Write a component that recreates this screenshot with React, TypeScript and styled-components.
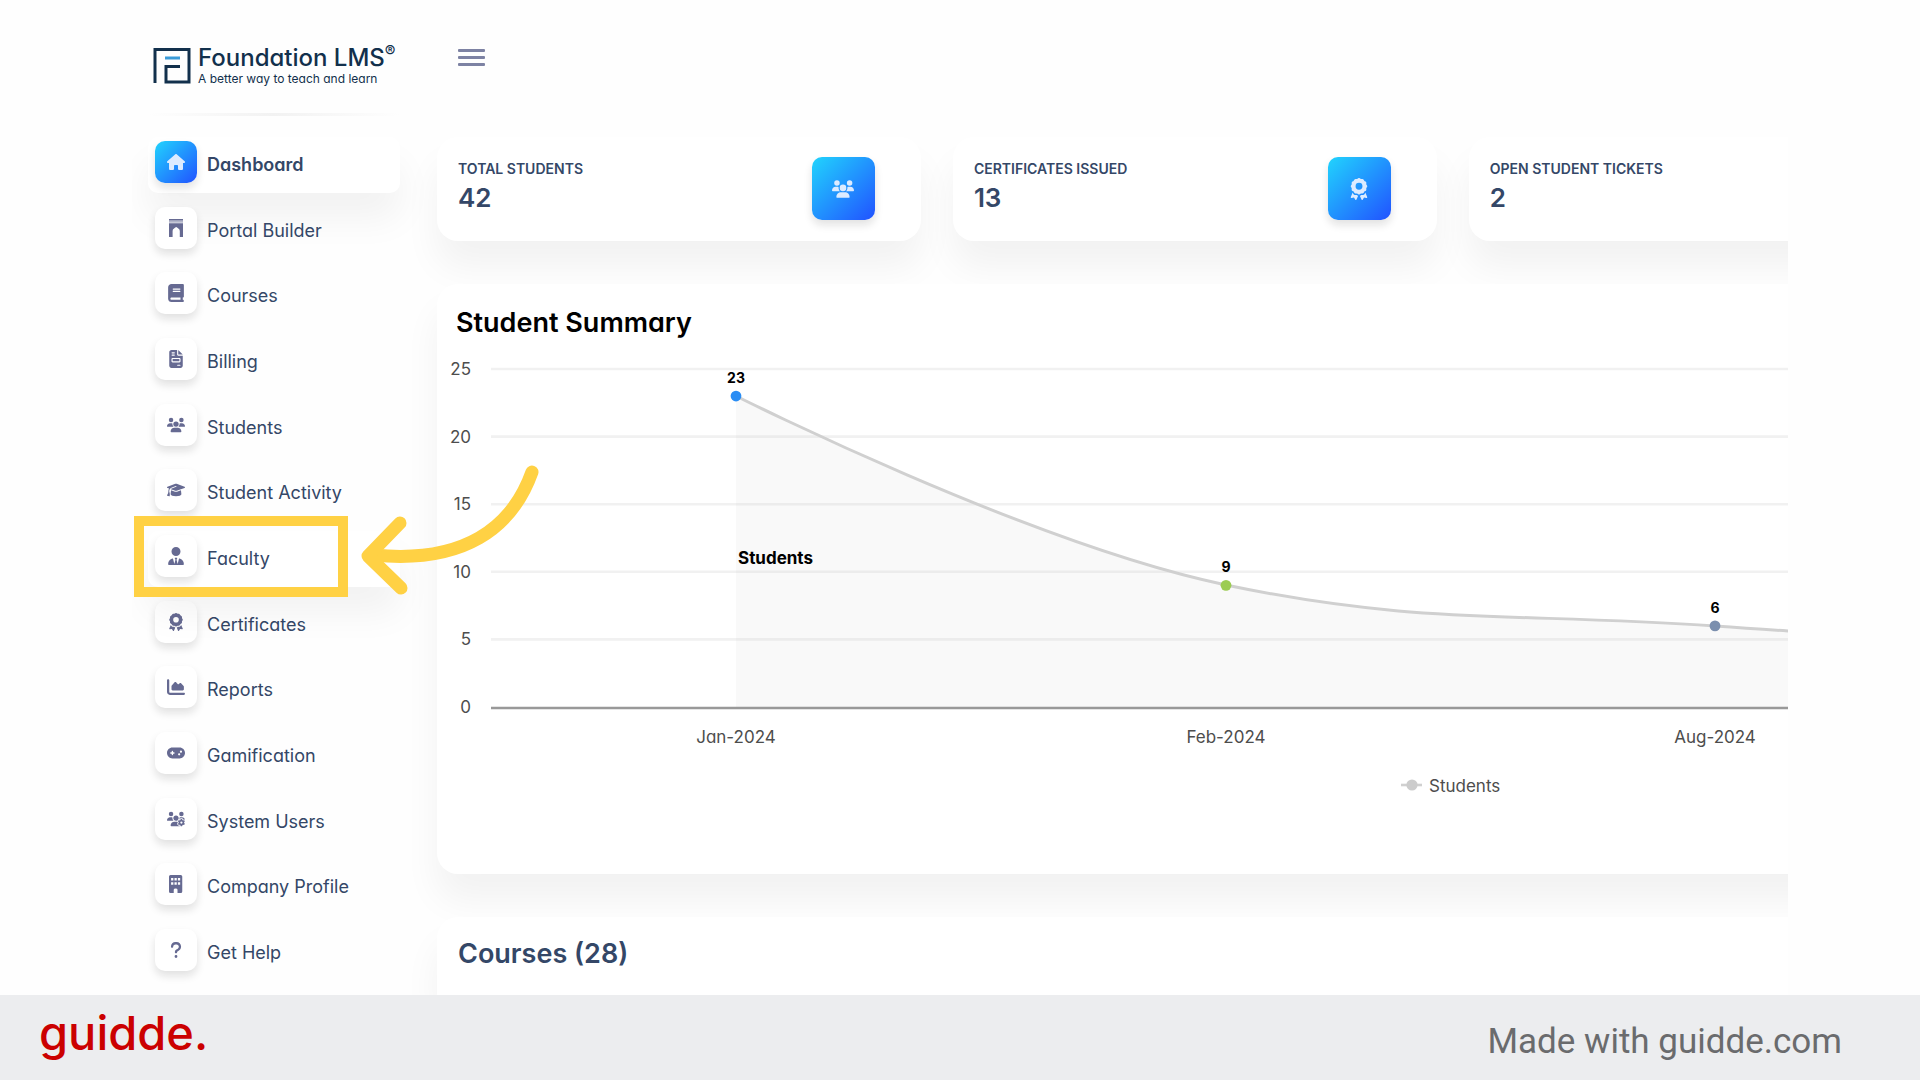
import React from "react";
import styled, { createGlobalStyle, css } from "styled-components";
import {
  FaHouse,
  FaBook,
  FaFileInvoice,
  FaUsers,
  FaGraduationCap,
  FaUserTie,
  FaAward,
  FaChartArea,
  FaGamepad,
  FaUsersGear,
  FaQuestion,
} from "react-icons/fa6";

const color = {
  ink: "#344767",
  icon: "#666a92",
  navy: "#12304c",
  highlight: "#ffd144",
  brand: "#cb0000",
};

const blueGradient = "linear-gradient(135deg, #21d4fd, #2152ff)";
const softShadow = "0 26px 36px rgba(0, 0, 0, 0.05)";
const tileShadow = "0 5px 8px rgba(20, 20, 20, 0.12)";

const GlobalStyle = createGlobalStyle`
  *, *::before, *::after { box-sizing: border-box; }
  body {
    margin: 0;
    background: #fefefe;
    color: ${color.ink};
    font-family: Inter, "Liberation Sans", sans-serif;
    font-feature-settings: "cv11";
  }
  h1, h2, p, ul, dl, dd { margin: 0; padding: 0; }
  ul { list-style: none; }
`;

const Page = styled.div`
  display: flex;
  flex-direction: column;
  min-height: 100vh;
`;

const Screen = styled.div`
  display: flex;
  flex: 1;
  margin: 0 132px;
  overflow: hidden;
`;

const Sidebar = styled.aside`
  display: flex;
  flex-direction: column;
  flex: none;
  width: 305px;
  padding: 0 37px 9px 16px;
`;

const Brand = styled.a`
  display: flex;
  gap: 7px;
  height: 113px;
  padding: 46px 0 0 5px;
  color: ${color.navy};
  text-decoration: none;
`;

const BrandMark = styled.svg`
  flex: none;
  width: 38px;
  height: 38px;
`;

const BrandName = styled.span`
  display: block;
  font-size: 24px;
  font-weight: 500;
  line-height: 24px;
  white-space: nowrap;
`;

const Registered = styled.sup`
  font-size: 16px;
  line-height: 0;
`;

const Tagline = styled.span`
  display: block;
  font-size: 12px;
  line-height: 18px;
  white-space: nowrap;
`;

const Divider = styled.hr`
  width: 100%;
  height: 3px;
  margin: 0 0 16px;
  border: 0;
  background: linear-gradient(90deg, transparent, #f2f2f2, transparent);
`;

const Nav = styled.nav`
  display: flex;
  flex: 1;
`;

const NavList = styled.ul`
  display: grid;
  flex: 1;
  grid-auto-rows: 1fr;
  align-items: center;
`;

const NavItem = styled.li<{ $highlighted?: boolean }>`
  position: relative;
  z-index: ${(p) => (p.$highlighted ? 2 : 1)};
`;

const NavLink = styled.a<{ $raised?: boolean; $active?: boolean }>`
  display: flex;
  gap: 10px;
  height: 56px;
  padding: 4px 7px;
  border-radius: 10px;
  color: ${color.ink};
  font-size: 18px;
  font-weight: ${(p) => (p.$active ? 600 : 400)};
  line-height: 48px;
  text-decoration: none;
  white-space: nowrap;
  ${(p) =>
    p.$raised &&
    css`
      background: #fff;
      box-shadow: ${softShadow};
    `}
`;

const NavTile = styled.span<{ $active?: boolean }>`
  display: grid;
  place-items: center;
  flex: none;
  width: 42px;
  height: 42px;
  border-radius: 10px;
  background: ${(p) => (p.$active ? blueGradient : "#fff")};
  box-shadow: ${tileShadow};
  color: ${(p) => (p.$active ? "#dcebff" : color.icon)};

  svg {
    width: auto;
    height: 18px;
  }
`;

const HighlightBox = styled.span`
  position: absolute;
  top: -15px;
  left: -14px;
  width: 214px;
  height: 81px;
  border: 10px solid ${color.highlight};
  pointer-events: none;
`;

const HighlightArrow = styled.svg`
  position: absolute;
  top: -75px;
  left: 208px;
  width: 190px;
  height: 146px;
  pointer-events: none;
`;

const Main = styled.main`
  display: flex;
  flex: 1;
  flex-direction: column;
  min-width: 0;
`;

const TopBar = styled.header`
  display: flex;
  align-items: flex-start;
  height: 137px;
  padding: 48px 21px 0;
`;

const MenuButton = styled.button`
  display: flex;
  flex-direction: column;
  justify-content: space-between;
  width: 27px;
  height: 19px;
  padding: 1px 0;
  border: 0;
  background: none;
`;

const MenuBar = styled.span`
  height: 3px;
  border-radius: 1px;
  background: #7d82a3;
`;

const Board = styled.div`
  display: flex;
  flex: 1;
  flex-direction: column;
  gap: 43px;
  width: calc(150% + 5px);
`;

const StatGrid = styled.dl`
  display: grid;
  grid-template-columns: repeat(4, 1fr);
  gap: 32px;
`;

const StatCard = styled.div`
  display: flex;
  justify-content: space-between;
  padding: 20px 46px 21px 21px;
  border-radius: 21px;
  background: #fff;
  box-shadow: ${softShadow};
`;

const StatLabel = styled.dt`
  font-size: 14px;
  font-weight: 600;
  line-height: 24px;
  text-transform: uppercase;
`;

const StatValue = styled.dd`
  font-size: 26px;
  font-weight: 600;
  line-height: 34px;
`;

const StatTile = styled.span`
  display: grid;
  place-items: center;
  width: 63px;
  height: 63px;
  border-radius: 10px;
  background: ${blueGradient};
  box-shadow: ${tileShadow};
  color: #dcebff;

  svg {
    width: auto;
    height: 22px;
  }
`;

const Panel = styled.section<{ $open?: boolean }>`
  flex: ${(p) => (p.$open ? "1" : "none")};
  border-radius: ${(p) => (p.$open ? "21px 21px 0 0" : "21px")};
  background: #fff;
  box-shadow: ${softShadow};
`;

const ChartTitle = styled.h2`
  padding: 19px 19px 1px;
  color: #000;
  font-size: 27px;
  font-weight: 600;
  line-height: 40px;
`;

const PanelTitle = styled.h2`
  padding: 17px 21px 0;
  font-size: 27px;
  font-weight: 600;
  line-height: 40px;
`;

const Chart = styled.svg`
  display: block;
  width: 2026px;
  height: 530px;
`;

const AxisText = styled.text`
  fill: #4d4d4d;
  font-size: 17px;
`;

const ValueText = styled.text`
  fill: #000;
  font-size: 14px;
  font-weight: 700;
  text-anchor: middle;
`;

const SeriesText = styled.text`
  fill: #000;
  font-size: 17px;
  font-weight: 700;
`;

const Footer = styled.footer`
  display: flex;
  align-items: center;
  justify-content: space-between;
  height: 85px;
  padding: 0 78px 0 39px;
  background: #ecedef;
`;

const GuiddeLogo = styled.a`
  padding-bottom: 10px;
  color: ${color.brand};
  font-size: 47px;
  font-weight: 500;
  line-height: 56px;
  text-decoration: none;
`;

const Credit = styled.p`
  padding-top: 8px;
  color: #6a6b6d;
  font-family: Roboto, sans-serif;
  font-size: 35px;
  line-height: 40px;
`;

function PortalIcon() {
  return (
    <svg viewBox="0 0 16 20" fill="currentColor" aria-hidden="true">
      <path d="M0 0H16V1.800H0Z" />
      <path d="M0 2.400H16V4H0Z" opacity="0.6" />
      <path d="M0 4.600H16V20H12V13.200C12 10.800 9.800 10.200 8 8.800C6.200 10.200 4 10.800 4 13.200V20H0Z" />
    </svg>
  );
}

function BuildingIcon() {
  return (
    <svg viewBox="0 0 14 19" fill="currentColor" fillRule="evenodd" aria-hidden="true">
      <path d="M1.600 0H12.400Q14 0 14 1.600V17.400Q14 19 12.400 19H9V15.500Q9 14.200 7 14.200Q5 14.200 5 15.500V19H1.600Q0 19 0 17.400V1.600Q0 0 1.600 0ZM2.200 3.200V5.800H4.600V3.200ZM5.800 3.200V5.800H8.200V3.200ZM9.400 3.200V5.800H11.800V3.200ZM2.200 7.600V10.200H4.600V7.600ZM5.800 7.600V10.200H8.200V7.600ZM9.400 7.600V10.200H11.800V7.600Z" />
    </svg>
  );
}

type NavEntry = {
  label: string;
  icon: React.ComponentType;
  active?: boolean;
  highlighted?: boolean;
};

const navEntries: NavEntry[] = [
  { label: "Dashboard", icon: FaHouse, active: true },
  { label: "Portal Builder", icon: PortalIcon },
  { label: "Courses", icon: FaBook },
  { label: "Billing", icon: FaFileInvoice },
  { label: "Students", icon: FaUsers },
  { label: "Student Activity", icon: FaGraduationCap },
  { label: "Faculty", icon: FaUserTie, highlighted: true },
  { label: "Certificates", icon: FaAward },
  { label: "Reports", icon: FaChartArea },
  { label: "Gamification", icon: FaGamepad },
  { label: "System Users", icon: FaUsersGear },
  { label: "Company Profile", icon: BuildingIcon },
  { label: "Get Help", icon: FaQuestion },
];

const stats = [
  { label: "Total Students", value: 42, icon: FaUsers },
  { label: "Certificates Issued", value: 13, icon: FaAward },
  { label: "Open Student Tickets", value: 2 },
];

const plot = { left: 54, right: 2012, base: 363, top: 25, max: 25 };
const yFor = (value: number) => plot.base - ((plot.base - plot.top) * value) / plot.max;

const points = [
  { month: "Jan-2024", value: 23, x: 299, fill: "#2a8df4" },
  { month: "Feb-2024", value: 9, x: 789, fill: "#9ccc52" },
  { month: "Aug-2024", value: 6, x: 1278, fill: "#7b8fae" },
];

const curve = "M299 52 C299 52 593 200 789 241 C985 282 1082 268 1278 282 C1474 296 1768 309 1768 309";

function StudentChart() {
  return (
    <Chart viewBox="0 0 2026 530" role="img" aria-label="Students per month">
      {[5, 10, 15, 20, 25].map((tick) => (
        <line key={tick} x1={plot.left} x2={plot.right} y1={yFor(tick)} y2={yFor(tick)} stroke="#f1f1f1" strokeWidth="2.6" />
      ))}
      <path d={`${curve} V363 H299 Z`} fill="#cccccc" fillOpacity="0.11" />
      <line x1={plot.left} x2={plot.right} y1={plot.base + 1} y2={plot.base + 1} stroke="#999" strokeWidth="2.6" />
      {[0, 5, 10, 15, 20, 25].map((tick) => (
        <AxisText key={tick} x={34} y={yFor(tick) + 6} textAnchor="end">
          {tick}
        </AxisText>
      ))}
      <path d={curve} fill="none" stroke="#d0d0d0" strokeWidth="3" />
      {points.map((p) => (
        <g key={p.month}>
          <circle cx={p.x} cy={yFor(p.value)} r="5.4" fill={p.fill} />
          <ValueText x={p.x} y={yFor(p.value) - 13}>
            {p.value}
          </ValueText>
          <AxisText x={p.x} y={399} textAnchor="middle">
            {p.month}
          </AxisText>
        </g>
      ))}
      <SeriesText x={301} y={220}>
        Students
      </SeriesText>
      <line x1="964" x2="985" y1="441" y2="441" stroke="#d0d0d0" strokeWidth="2.6" />
      <circle cx="975" cy="441" r="5.6" fill="#ccc" />
      <AxisText x={992} y={448}>
        Students
      </AxisText>
    </Chart>
  );
}

function SideNav() {
  return (
    <Nav aria-label="Main">
      <NavList>
        {navEntries.map(({ label, icon: Icon, active, highlighted }) => (
          <NavItem key={label} $highlighted={highlighted}>
            <NavLink href="#" $active={active} $raised={active || highlighted} aria-current={active ? "page" : undefined}>
              <NavTile $active={active}>
                <Icon />
              </NavTile>
              {label}
            </NavLink>
            {highlighted && (
              <>
                <HighlightBox />
                <HighlightArrow
                  viewBox="0 0 190 146"
                  fill="none"
                  stroke={color.highlight}
                  strokeWidth="13"
                  strokeLinecap="round"
                  strokeLinejoin="round"
                  aria-hidden="true"
                >
                  <path d="M176 16C156 72 108 108 18 99" />
                  <path d="M44 67L12 100L45 132" />
                </HighlightArrow>
              </>
            )}
          </NavItem>
        ))}
      </NavList>
    </Nav>
  );
}

export default function App() {
  return (
    <>
      <GlobalStyle />
      <Page>
        <Screen>
          <Sidebar>
            <Brand href="#">
              <BrandMark viewBox="0 0 38 38" fill="none" strokeWidth="3" aria-hidden="true">
                <path d="M2 37V3.500H36V36H13V20.500H27" stroke={color.navy} />
                <path d="M12 12H27" stroke="#3a9bd8" />
              </BrandMark>
              <span>
                <BrandName>
                  Foundation LMS<Registered>®</Registered>
                </BrandName>
                <Tagline>A better way to teach and learn</Tagline>
              </span>
            </Brand>
            <Divider />
            <SideNav />
          </Sidebar>
          <Main>
            <TopBar>
              <MenuButton type="button" aria-label="Toggle menu">
                <MenuBar />
                <MenuBar />
                <MenuBar />
              </MenuButton>
            </TopBar>
            <Board>
              <StatGrid>
                {stats.map(({ label, value, icon: Icon }) => (
                  <StatCard key={label}>
                    <div>
                      <StatLabel>{label}</StatLabel>
                      <StatValue>{value}</StatValue>
                    </div>
                    {Icon && (
                      <StatTile>
                        <Icon aria-hidden="true" />
                      </StatTile>
                    )}
                  </StatCard>
                ))}
              </StatGrid>
              <Panel>
                <ChartTitle>Student Summary</ChartTitle>
                <StudentChart />
              </Panel>
              <Panel $open>
                <PanelTitle>Courses (28)</PanelTitle>
              </Panel>
            </Board>
          </Main>
        </Screen>
        <Footer>
          <GuiddeLogo href="#">guidde.</GuiddeLogo>
          <Credit>Made with guidde.com</Credit>
        </Footer>
      </Page>
    </>
  );
}
